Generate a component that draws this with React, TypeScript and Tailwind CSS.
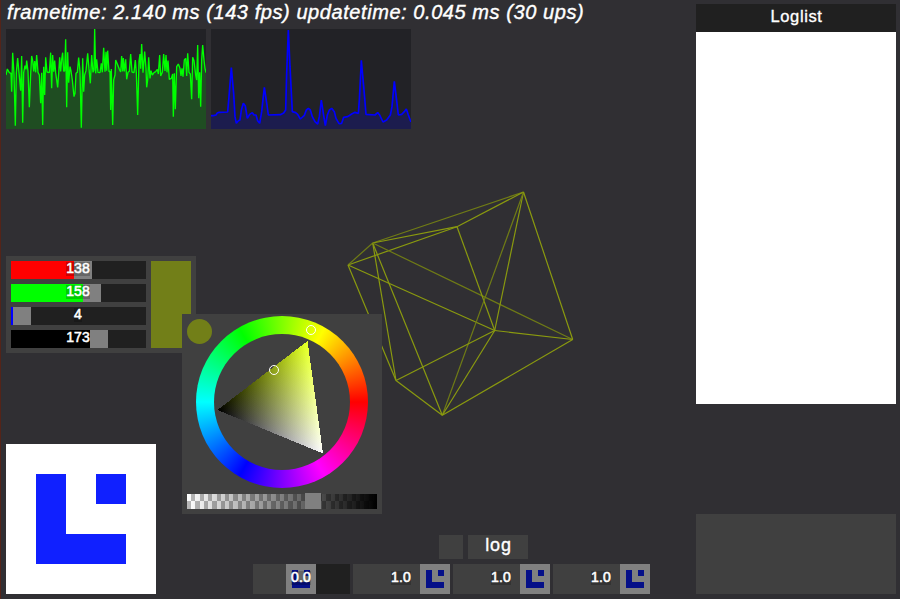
import React from "react";

const FRAME_POINTS =
  "18,225 22,207 28,218 33,220 35,275 38,158 42,222 46,377 49,218 53,174 57,218 62,272 65,168 68,368 71,218 75,197 78,208 80,182 84,214 88,322 92,222 95,168 98,182 101,214 104,183 107,217 110,165 114,217 118,225 122,310 125,218 128,375 131,200 134,285 137,172 141,216 148,218 152,158 155,265 158,165 161,215 164,182 167,218 173,262 176,220 179,172 182,214 185,178 188,158 191,214 194,212 197,118 200,322 203,157 206,248 210,200 213,213 217,240 222,290 225,280 228,220 232,217 236,173 240,214 244,383 248,175 251,275 254,225 258,212 263,160 267,206 271,250 275,165 279,217 282,210 284,87 287,220 290,178 294,217 300,218 304,190 307,217 311,143 315,215 318,155 320,212 323,152 327,215 330,214 332,330 334,207 338,375 341,240 345,225 347,180 352,192 358,208 362,216 365,168 368,214 370,174 373,214 377,178 380,238 384,217 388,214 392,162 396,216 402,218 406,180 409,218 413,345 417,184 420,162 422,206 425,132 429,218 434,155 438,205 440,262 443,240 446,172 450,235 453,212 457,225 462,218 467,215 472,208 475,222 479,165 482,228 487,217 491,162 495,213 498,165 501,217 504,182 508,238 514,235 518,222 520,350 523,220 526,328 530,200 535,192 540,205 543,228 546,205 549,230 553,180 557,175 560,228 563,160 567,217 571,222 575,298 578,172 582,182 587,225 590,240 593,135 596,295 599,217 602,320 605,180 608,135 612,180 615,205 618,218";

const UPDATE_POINTS =
  "18,347 25,347 33,345 36,340 42,337 68,336 72,290 79,203 86,280 90,350 94,370 100,362 105,360 109,330 115,310 121,318 127,355 134,343 142,338 147,345 153,345 158,362 164,370 170,335 178,262 186,315 190,345 226,344 236,339 242,330 245,220 250,90 255,200 262,335 272,338 278,343 286,357 298,346 304,330 310,325 316,330 322,350 330,365 338,372 343,350 349,300 355,340 361,377 367,345 373,330 380,325 388,335 393,355 402,371 410,370 416,352 428,350 440,342 450,337 460,340 463,300 469,181 477,270 483,343 510,345 518,338 524,345 534,366 545,360 556,345 561,320 568,244 576,310 580,345 590,343 598,335 604,327 610,345 618,366";

function Chart({ points, stroke, fill, weight }: { points: string; stroke: string; fill: string; weight: number }) {
  return (
    <svg className="block h-[100px] w-[200px] bg-[#222226]" viewBox="18 87 600 300">
      <polygon points={`18,387 ${points} 618,387`} fill={fill} />
      <polyline points={points} fill="none" stroke={stroke} strokeWidth={weight} strokeLinejoin="bevel" />
    </svg>
  );
}

function Logo({ className }: { className: string }) {
  return (
    <svg className={className} viewBox="0 0 3 3" shapeRendering="crispEdges" fill="currentColor">
      <path d="M0 0h1v2h2v1H0zM2 0h1v1H2z" />
    </svg>
  );
}

function ValueLabel({ children }: { children: React.ReactNode }) {
  return (
    <span className="absolute inset-0 flex items-center justify-center">
      <span className="bg-black/20 pb-[2px] text-[14px] leading-[12px] tracking-[0.1px] text-white [-webkit-text-stroke:0.55px_white]">{children}</span>
    </span>
  );
}

const CHANNELS = [
  { value: 138, fill: "bg-[#ff0000]", width: 63 },
  { value: 158, fill: "bg-[#00ff00]", width: 72 },
  { value: 4, fill: "bg-[#0000ff]", width: 2 },
  { value: 173, fill: "bg-black", width: 79 },
];

function ColorSliders() {
  return (
    <div className="flex h-[97px] w-[190px] gap-[5px] bg-[#404040] p-[5px]">
      <div className="flex w-[135px] flex-col gap-[5px]">
        {CHANNELS.map((c) => (
          <div key={c.value} className="relative flex h-[18px] bg-[#202020]">
            <div className={c.fill} style={{ width: c.width }} />
            <div className="w-[18px] bg-[#808080]" />
            <div className="absolute left-0 right-px top-0 h-4">
              <ValueLabel>{c.value}</ValueLabel>
            </div>
          </div>
        ))}
      </div>
      <div className="w-10 bg-[#727f18]" />
    </div>
  );
}

const VERTICES: Record<string, [number, number]> = {
  A: [523.5, 192],
  B: [457, 226.7],
  C: [372.7, 243],
  D: [348, 265],
  E: [396, 380.5],
  F: [442.3, 415.3],
  G: [494.7, 330.5],
  H: [572.7, 339.5],
};
const EDGES = "AC AB BC BD CD DG DE CE CF CH BG AG AF AH GH GE GF EF FH".split(" ");
const DIM_EDGES = ["AC", "AF", "CH", "CD"];

function Wireframe() {
  return (
    <svg className="pointer-events-none absolute left-0 top-0" width="690" height="500">
      {EDGES.map((e) => {
        const [a, b] = [VERTICES[e[0]], VERTICES[e[1]]];
        return (
          <line key={e} x1={a[0]} y1={a[1]} x2={b[0]} y2={b[1]} strokeWidth="1.2"
            stroke={DIM_EDGES.includes(e) ? "#6f7b16" : "#8a9a0f"} />
        );
      })}
    </svg>
  );
}

const CHECKER_COLUMNS = 45;
const CELL = 190 / CHECKER_COLUMNS;

function Checker() {
  return (
    <svg className="block bg-white" width="190" height="15" shapeRendering="crispEdges">
      {Array.from({ length: CHECKER_COLUMNS }, (_, i) => (
        <rect key={i} x={i * CELL} y={i % 2 ? 0 : 7} width={CELL} height={i % 2 ? 7 : 8} fill="#b8b8b8" />
      ))}
    </svg>
  );
}

function ColorPicker() {
  return (
    <div className="absolute left-[182px] top-[314px] h-[200px] w-[200px] bg-[#404040]">
      <div className="absolute left-[14px] top-[2px] h-[172px] w-[172px] rounded-full bg-[conic-gradient(from_90deg,#f00,#f0f,#00f,#0ff,#0f0,#ff0,#f00)] p-[18px]">
        <div className="h-full w-full rounded-full bg-[#404040]" />
      </div>
      <svg className="absolute inset-0 isolate" width="200" height="200" viewBox="182 314 200 200">
        <defs>
          {/* Each gradient runs from a corner to its foot on the opposite edge. */}
          <linearGradient id="hue" gradientUnits="userSpaceOnUse" x1="307" y1="341" x2="270.4" y2="431.7">
            <stop offset="0" stopColor="#dfff1a" />
            <stop offset="1" stopColor="#000" />
          </linearGradient>
          <linearGradient id="white" gradientUnits="userSpaceOnUse" x1="323" y1="453" x2="259" y2="377.6">
            <stop offset="0" stopColor="#fff" />
            <stop offset="1" stopColor="#000" />
          </linearGradient>
        </defs>
        <polygon points="307.5,341 217.5,410 323,453.5" fill="url(#hue)" shapeRendering="crispEdges" />
        <polygon className="mix-blend-plus-lighter" points="307.5,341 217.5,410 323,453.5" fill="url(#white)" shapeRendering="crispEdges" />
        <circle cx="199.5" cy="331.5" r="12.5" fill="#727f18" />
        <circle cx="311" cy="330" r="4.5" fill="none" stroke="#fff" />
        <circle cx="274" cy="370" r="4.5" fill="none" stroke="#fff" />
      </svg>
      <div className="absolute left-[5px] top-[180px] h-[15px] w-[190px]">
        <Checker />
        <div className="absolute inset-0 bg-linear-to-r from-transparent to-black" />
        <div className="absolute -top-px left-[118px] h-4 w-4 bg-[#808080]" />
      </div>
    </div>
  );
}

function ImageSlider({ value, offset }: { value: string; offset: number }) {
  return (
    <div className="relative flex h-[30px] w-[97px] bg-[#202020]">
      <div className="bg-[#404040]" style={{ width: offset }} />
      <div className="h-[30px] w-[30px] bg-[#808080] p-[6px]">
        <Logo className="block h-[18px] w-[18px] text-[#050f88]" />
      </div>
      <div className="absolute left-0 right-px top-0 h-[28px]">
        <ValueLabel>{value}</ValueLabel>
      </div>
    </div>
  );
}

export default function App() {
  return (
    <div className="relative flex h-[599px] w-[900px] overflow-hidden border-l border-[#542419] bg-[#302f33] font-['Liberation_Sans',Arial,sans-serif] text-white">
      <main className="flex w-[695px] flex-col pl-[5px]">
        <h1 className="h-[29px] whitespace-nowrap pl-px pt-px text-[20px] italic leading-[23px] tracking-[0.57px] [-webkit-text-stroke:0.4px_white]">
          frametime: 2.140 ms (143 fps) updatetime: 0.045 ms (30 ups)
        </h1>
        <div className="mb-[127px] flex gap-[5px]">
          <Chart points={FRAME_POINTS} stroke="#00ff00" fill="#1f4d22" weight={4} />
          <Chart points={UPDATE_POINTS} stroke="#0000ff" fill="#1c1c4e" weight={5} />
        </div>
        <ColorSliders />
        <div className="mt-[91px] flex h-[150px] gap-[97px]">
          <div className="h-[150px] w-[150px] bg-white p-[30px]">
            <Logo className="block h-[90px] w-[90px] text-[#1020ff]" />
          </div>
          <div className="flex flex-col justify-end gap-[5px]">
            <div className="ml-[186px] flex gap-[5px]">
              <button className="h-6 w-6 bg-[#404040]" />
              <button className="h-6 w-[60px] bg-[#404040] pb-[3px] pl-px text-[18px] leading-[21px] tracking-[0.8px] [-webkit-text-stroke:0.35px_white]">log</button>
            </div>
            <div className="flex gap-[3px]">
              <ImageSlider value="0.0" offset={33} />
              <ImageSlider value="1.0" offset={67} />
              <ImageSlider value="1.0" offset={67} />
              <ImageSlider value="1.0" offset={67} />
            </div>
          </div>
        </div>
      </main>
      <aside className="flex w-[200px] flex-col pt-1">
        <h2 className="h-7 bg-[#202020] pl-px text-center text-[16.5px] leading-[25px] tracking-[0.6px] [-webkit-text-stroke:0.35px_white]">Loglist</h2>
        <div className="h-[372px] bg-white" />
        <div className="mt-[110px] h-20 bg-[#404040]" />
      </aside>
      <div className="pointer-events-none absolute -left-px top-0 h-[599px] w-[690px]">
        <Wireframe />
        <ColorPicker />
      </div>
    </div>
  );
}
